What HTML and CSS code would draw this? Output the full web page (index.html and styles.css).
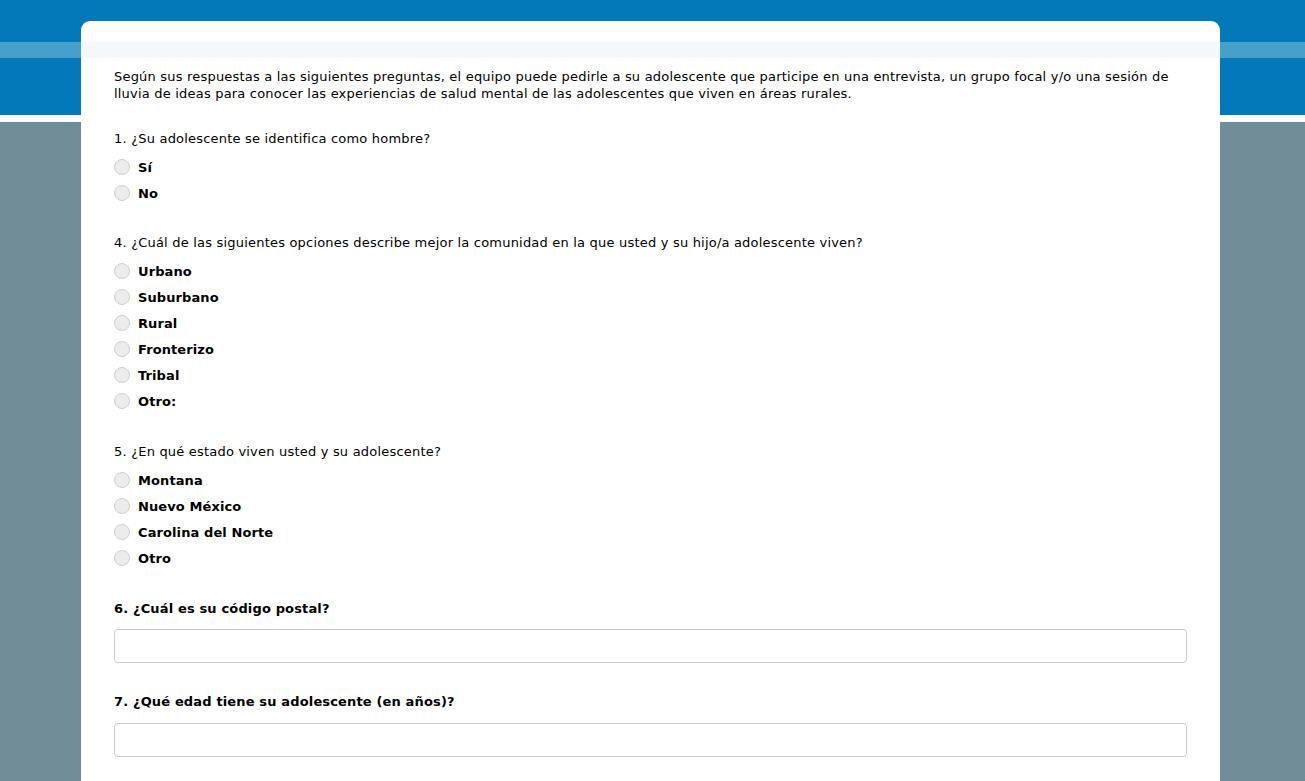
FILE: index.html
```html
<!DOCTYPE html>
<html lang="es">
<head>
<meta charset="utf-8">
<title>Encuesta</title>
<link rel="stylesheet" href="styles.css">
</head>
<body>
<div class="hero">
  <div class="hero-stripe"></div>
</div>
<main class="card">
  <div class="card-stripe"></div>
  <div class="card-body">
    <p class="intro">Según sus respuestas a las siguientes preguntas, el equipo puede pedirle a su adolescente que participe en una entrevista, un grupo focal y/o una sesión de lluvia de ideas para conocer las experiencias de salud mental de las adolescentes que viven en áreas rurales.</p>

    <section class="question q1">
      <div class="q-text">1. ¿Su adolescente se identifica como hombre?</div>
      <div class="options">
        <label class="option"><span class="radio"></span><span class="opt-label">Sí</span></label>
        <label class="option"><span class="radio"></span><span class="opt-label">No</span></label>
      </div>
    </section>

    <section class="question q4">
      <div class="q-text">4. ¿Cuál de las siguientes opciones describe mejor la comunidad en la que usted y su hijo/a adolescente viven?</div>
      <div class="options">
        <label class="option"><span class="radio"></span><span class="opt-label">Urbano</span></label>
        <label class="option"><span class="radio"></span><span class="opt-label">Suburbano</span></label>
        <label class="option"><span class="radio"></span><span class="opt-label">Rural</span></label>
        <label class="option"><span class="radio"></span><span class="opt-label">Fronterizo</span></label>
        <label class="option"><span class="radio"></span><span class="opt-label">Tribal</span></label>
        <label class="option"><span class="radio"></span><span class="opt-label">Otro:</span></label>
      </div>
    </section>

    <section class="question q5">
      <div class="q-text">5. ¿En qué estado viven usted y su adolescente?</div>
      <div class="options">
        <label class="option"><span class="radio"></span><span class="opt-label">Montana</span></label>
        <label class="option"><span class="radio"></span><span class="opt-label">Nuevo México</span></label>
        <label class="option"><span class="radio"></span><span class="opt-label">Carolina del Norte</span></label>
        <label class="option"><span class="radio"></span><span class="opt-label">Otro</span></label>
      </div>
    </section>

    <section class="question q6">
      <div class="q-text bold">6. ¿Cuál es su código postal?</div>
      <div class="text-input"></div>
    </section>

    <section class="question q7">
      <div class="q-text bold">7. ¿Qué edad tiene su adolescente (en años)?</div>
      <div class="text-input"></div>
    </section>
  </div>
</main>
</body>
</html>
```

FILE: styles.css
```css
html, body {
  margin: 0;
  padding: 0;
}
body {
  background: #718d98;
  font-family: "DejaVu Sans", Verdana, sans-serif;
  font-size: 13px;
  line-height: 17px;
  letter-spacing: 0.2px;
  color: #000;
  overflow: hidden;
}
.hero {
  height: 73px;
  padding-top: 42px;
  background: #0479ba;
  border-bottom: 7px solid #fff;
}
.hero-stripe {
  height: 16px;
  background: #479fcc;
}
.card {
  position: relative;
  margin: -101px 85px 0 81px;
  background: #fff;
  border-radius: 9px 9px 0 0;
  padding-top: 21px;
  min-height: 800px;
}
.card-stripe {
  height: 16px;
  background: #f5f8fb;
}
.card-body {
  padding: 10px 33px 0 33px;
}
.intro {
  margin: 0;
}
.question {
  margin-top: 29px;
}
.question.q1,
.question.q4 {
  margin-top: 28px;
}
.question.q7 {
  margin-top: 30px;
}
.q-text.bold {
  font-weight: bold;
  letter-spacing: 0.15px;
}
.options {
  margin-top: 7px;
  display: flex;
  flex-direction: column;
}
.option {
  display: flex;
  align-items: center;
  height: 26px;
}
.radio {
  width: 14px;
  height: 14px;
  border: 1px solid #cfcfcf;
  border-radius: 50%;
  background: #ececec;
  flex: none;
}
.opt-label {
  margin-left: 8px;
  font-weight: bold;
  letter-spacing: 0.1px;
}
.text-input {
  margin-top: 12px;
  height: 32px;
  border: 1px solid #cccccc;
  border-radius: 4px;
  background: #fff;
}
.q7 .text-input {
  margin-top: 13px;
}
```
